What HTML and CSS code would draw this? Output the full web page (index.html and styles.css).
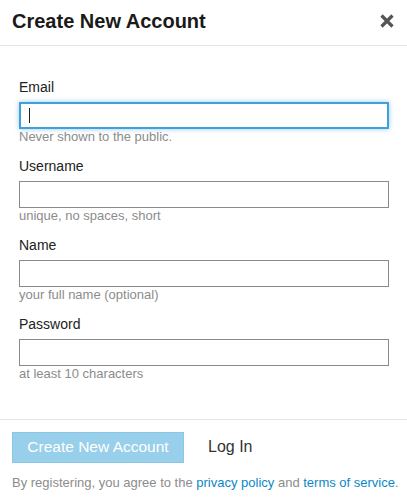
FILE: index.html
```html
<!DOCTYPE html>
<html>
<head>
<meta charset="utf-8">
<link rel="stylesheet" href="styles.css">
</head>
<body>
<div class="modal">
  <div class="modal-header">
    <h1 class="title">Create New Account</h1>
    <button class="close" type="button" aria-label="Close">
      <svg width="16" height="16" viewBox="0 0 16 16"><path d="M2.5 2.5 L13.5 13.5 M13.5 2.5 L2.5 13.5" stroke="#555" stroke-width="3.2" stroke-linecap="butt"/></svg>
    </button>
  </div>
  <form class="modal-body">
    <div class="field">
      <label class="label" for="email">Email</label>
      <div class="input-wrap">
        <input class="input focused" id="email" type="text">
        <span class="caret"></span>
      </div>
      <div class="hint">Never shown to the public.</div>
    </div>
    <div class="field">
      <label class="label" for="username">Username</label>
      <input class="input" id="username" type="text">
      <div class="hint">unique, no spaces, short</div>
    </div>
    <div class="field">
      <label class="label" for="name">Name</label>
      <input class="input" id="name" type="text">
      <div class="hint">your full name (optional)</div>
    </div>
    <div class="field">
      <label class="label" for="password">Password</label>
      <input class="input" id="password" type="password">
      <div class="hint">at least 10 characters</div>
    </div>
  </form>
  <div class="modal-footer">
    <div class="actions">
      <button class="btn-primary" type="button">Create New Account</button>
      <a class="login" href="#">Log In</a>
    </div>
    <p class="legal">By registering, you agree to the <a href="#">privacy policy</a> and <a href="#">terms of service</a>.</p>
  </div>
</div>
</body>
</html>
```
FILE: styles.css
```css
html, body {
  margin: 0;
  padding: 0;
  background: #fff;
}
body {
  font-family: "Liberation Sans", Arial, sans-serif;
  color: #222;
}
.modal {
  width: 407px;
}
.modal-header {
  height: 45px;
  border-bottom: 1px solid #e5e5e5;
  display: flex;
  align-items: center;
  justify-content: space-between;
  padding: 0 12px;
}
.title {
  margin: 0;
  font-size: 20px;
  font-weight: bold;
  color: #1a1a1a;
  line-height: 24px;
  padding-bottom: 3px;
}
.close {
  border: 0;
  background: none;
  padding: 0;
  width: 16px;
  height: 16px;
  margin-bottom: 4px;
  display: flex;
}
.modal-body {
  padding: 33px 18px 24px 19px;
  display: flex;
  flex-direction: column;
}
.field {
  display: flex;
  flex-direction: column;
  margin-bottom: 13px;
}
.label {
  font-size: 14px;
  line-height: 17px;
  color: #222;
  margin-bottom: 6px;
}
.input-wrap {
  position: relative;
  width: 370px;
  height: 27px;
}
.caret {
  position: absolute;
  left: 10px;
  top: 6px;
  width: 1px;
  height: 15px;
  background: #222;
}
.input {
  box-sizing: border-box;
  width: 370px;
  height: 27px;
  border: 1px solid #8a8a8a;
  border-radius: 0;
  padding: 0 9px;
  margin: 0;
  font-family: "Liberation Sans", Arial, sans-serif;
  font-size: 14px;
  outline: none;
  background: #fff;
  display: block;
}
.input.focused {
  border: 2px solid #3ea0dc;
  box-shadow: 0 0 5px rgba(62, 160, 220, 0.55);
  padding-left: 8px;
}
.hint {
  font-size: 13px;
  line-height: 16px;
  color: #8c8c8c;
}
.modal-footer {
  border-top: 1px solid #e5e5e5;
  padding: 12px 12px 0;
}
.actions {
  display: flex;
  align-items: center;
  gap: 24px;
}
.btn-primary {
  box-sizing: border-box;
  width: 172px;
  height: 31px;
  background: #98cfea;
  border: 1px solid #8cc6e6;
  color: #fff;
  font-family: "Liberation Sans", Arial, sans-serif;
  font-size: 15.5px;
  padding: 0 0 2px;
}
.login {
  font-size: 16px;
  color: #333;
  text-decoration: none;
  padding-bottom: 2px;
}
.legal {
  margin: 11px 0 0;
  font-size: 13px;
  line-height: 18px;
  color: #8c8c8c;
  white-space: nowrap;
}
.legal a {
  color: #0a88c8;
  text-decoration: none;
}
```
